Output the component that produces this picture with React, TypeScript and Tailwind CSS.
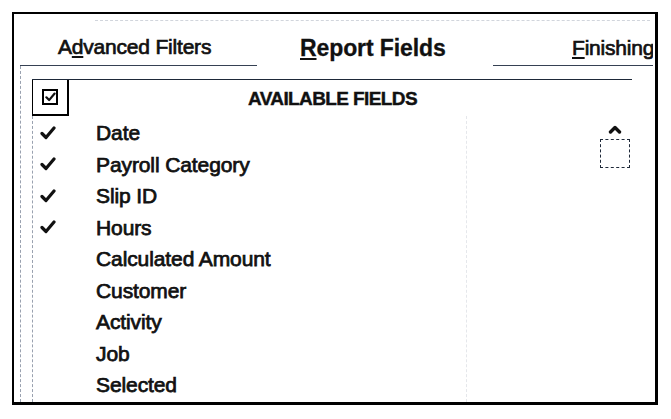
import React from "react";

const fields = [
  { name: "Date", checked: true },
  { name: "Payroll Category", checked: true },
  { name: "Slip ID", checked: true },
  { name: "Hours", checked: true },
  { name: "Calculated Amount", checked: false },
  { name: "Customer", checked: false },
  { name: "Activity", checked: false },
  { name: "Job", checked: false },
  { name: "Selected", checked: false },
];

const Check = ({ className }: { className?: string }) => (
  <svg viewBox="0 0 16 14" className={className} fill="none">
    <path d="M2 7.5 L6 11.5 L14 2" stroke="#111" strokeWidth="3.2" strokeLinecap="round" strokeLinejoin="round" />
  </svg>
);

const FieldRow = ({ name, checked }: { name: string; checked: boolean }) => (
  <div className="flex items-center h-[31.5px]">
    <div className="w-[63px] pl-[7px] flex items-center">
      {checked && <Check className="w-[16px] h-[14px]" />}
    </div>
    <span className="text-[21px] leading-[31.5px] tracking-[-0.1px] text-[#111] [-webkit-text-stroke:0.75px_#111]">
      {name}
    </span>
  </div>
);

export default function App() {
  return (
    <div className="w-[671px] h-[419px] bg-white pt-[12px] pl-[12px] font-['Liberation_Sans',Arial,sans-serif] overflow-hidden">
      <div className="w-[646px] h-[393px] border-2 border-r-[3px] border-b-[3px] border-black flex flex-col overflow-hidden">
        {/* faint line left over from the scan */}
        <div className="ml-[81px] mr-[5px] mt-[6px] h-0 border-t border-dashed border-gray-300" />

        {/* tabs */}
        <div className="flex h-[45px]">
          <div className="ml-[6px] w-[237px] border-b border-gray-700 pl-[38px] pt-[14px]">
            <span className="text-[21px] leading-[24px] tracking-[-0.2px] text-[#111] [-webkit-text-stroke:0.7px_#111] whitespace-nowrap">
              A<span className="underline underline-offset-2">d</span>vanced Filters
            </span>
          </div>
          <div className="w-[236px] pl-[43px] pt-[14px]">
            <span className="text-[23px] leading-[27px] font-bold tracking-[-0.1px] text-[#111] [-webkit-text-stroke:0.3px_#111] whitespace-nowrap">
              <span className="underline underline-offset-2">R</span>eport Fields
            </span>
          </div>
          <div className="flex-1 mr-[2px] border-b border-gray-700 pl-[79px] pt-[15px] overflow-hidden">
            <span className="text-[21px] leading-[24px] tracking-[-0.2px] text-[#111] [-webkit-text-stroke:0.7px_#111] whitespace-nowrap">
              <span className="underline underline-offset-2">F</span>inishing
            </span>
          </div>
        </div>

        {/* body */}
        <div className="flex-1 ml-[6px] border-l border-dashed border-gray-400 pl-[11px] pt-[13px]">
          <div className="w-[600px] h-full border-t border-gray-800 flex flex-col">
            {/* header */}
            <div className="flex h-[36px]">
              <div className="w-[37px] h-[36px] border-l border-r-2 border-b-2 border-black flex items-center justify-center">
                <div className="w-[16px] h-[16px] border-2 border-black flex items-center justify-center">
                  <Check className="w-[11px] h-[10px]" />
                </div>
              </div>
              <div className="flex-1 flex justify-center pr-[36px] pt-[2px]">
                <span className="text-[19px] leading-[34px] font-bold tracking-[-0.6px] text-[#111] [-webkit-text-stroke:0.4px_#111]">
                  AVAILABLE FIELDS
                </span>
              </div>
            </div>

            {/* list */}
            <div className="flex flex-1">
              <div className="w-[435px] border-l border-dashed border-gray-400 border-r border-r-gray-200 pt-[1px]">
                {fields.map((f) => (
                  <FieldRow key={f.name} name={f.name} checked={f.checked} />
                ))}
              </div>
              <div className="flex-1 flex flex-col items-end pr-[2px] pt-[9px]">
                <div className="w-[30px] flex flex-col items-center">
                  <svg viewBox="0 0 14 9" className="w-[14px] h-[9px]" fill="none">
                    <path d="M2.5 7 L7 2.5 L11.5 7" stroke="#111" strokeWidth="3.4" strokeLinecap="round" strokeLinejoin="round" />
                  </svg>
                  <div className="mt-[5px] w-[30px] h-[29px] border border-dashed border-gray-800" />
                </div>
              </div>
            </div>
          </div>
        </div>
      </div>
    </div>
  );
}
